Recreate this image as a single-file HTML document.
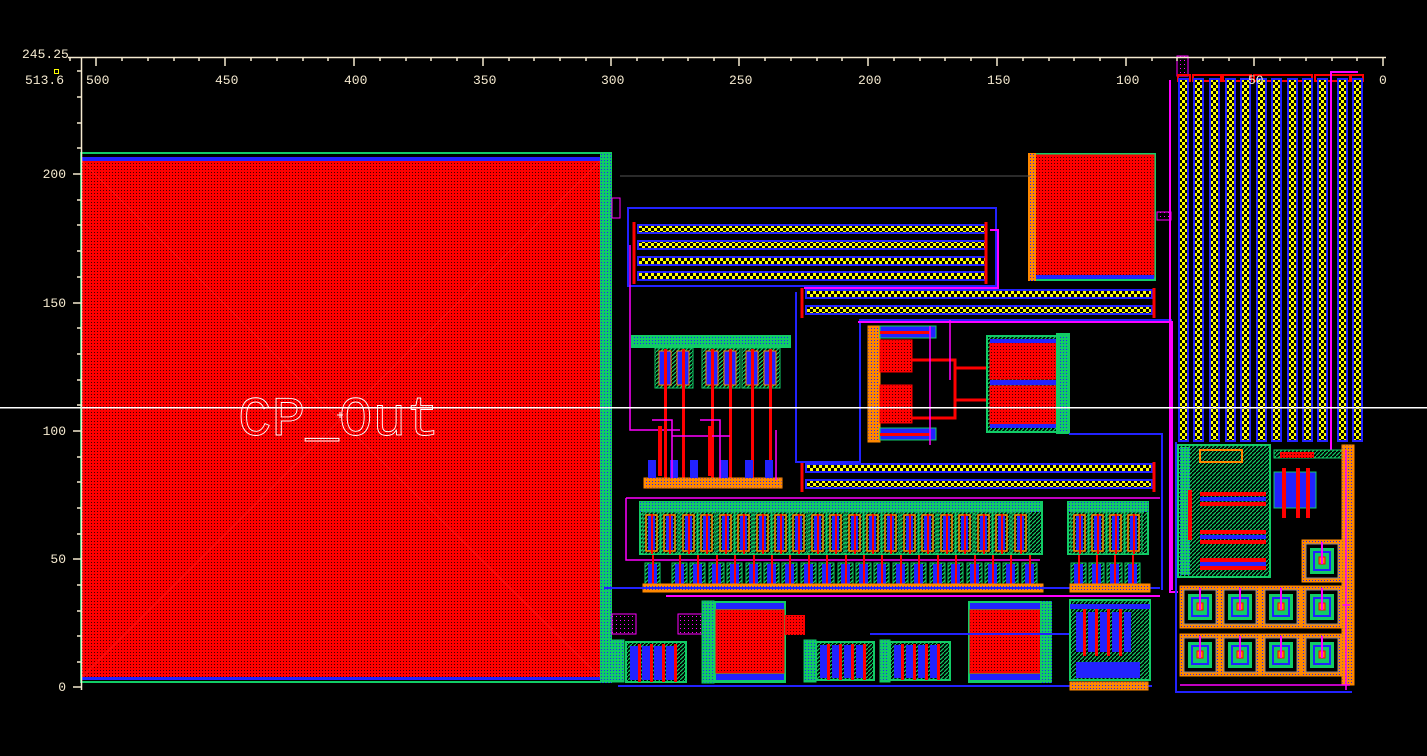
<!DOCTYPE html>
<html><head><meta charset="utf-8"><style>
html,body{margin:0;padding:0;background:#000;}
svg{display:block}
text{font-family:"Liberation Mono","DejaVu Sans Mono",monospace;}
</style></head><body>
<svg width="1427" height="756" viewBox="0 0 1427 756" xmlns="http://www.w3.org/2000/svg">
<defs>
<pattern id="pr" width="3" height="3" patternUnits="userSpaceOnUse"><rect width="3" height="3" fill="#f00"/><rect x="1" y="1" width="1" height="1" fill="#400"/></pattern>
<pattern id="py" width="6" height="6" patternUnits="userSpaceOnUse"><rect width="6" height="6" fill="#000"/><rect width="3" height="3" fill="#ff0"/><rect x="3" y="3" width="3" height="3" fill="#ff0"/></pattern>
<pattern id="pg" width="4" height="4" patternUnits="userSpaceOnUse"><rect width="4" height="4" fill="#000"/><path d="M0 4L4 0" stroke="#1c6" stroke-width="1.2"/></pattern>
<pattern id="po" width="3" height="3" patternUnits="userSpaceOnUse"><rect width="3" height="3" fill="#f80"/><rect x="1" y="1" width="1" height="1" fill="#2020ff"/></pattern>
<pattern id="pm" width="4" height="4" patternUnits="userSpaceOnUse"><rect width="4" height="4" fill="#000"/><rect width="1" height="1" fill="#f0f"/></pattern>
<pattern id="pgb" width="3" height="3" patternUnits="userSpaceOnUse"><rect width="3" height="3" fill="#1c6"/><rect x="1" y="1" width="1" height="1" fill="#22f"/></pattern>
<g id="fu">
 <rect x="0" y="0" width="17" height="42" fill="url(#pg)" stroke="#1c6"/>
 <rect x="3" y="3" width="11" height="36" fill="none" stroke="#f80" stroke-width="1.5"/>
 <rect x="5" y="4" width="7" height="34" fill="#22f"/>
 <rect x="8" y="2" width="2" height="40" fill="#f00"/>
</g>
<g id="fl">
 <rect x="0" y="0" width="15" height="22" fill="url(#pg)" stroke="#1c6"/>
 <rect x="3" y="1" width="9" height="21" fill="#22f"/>
 <rect x="7" y="-8" width="2" height="30" fill="#f00"/>
</g>
<g id="cell">
 <rect x="0" y="0" width="40" height="42" fill="url(#po)" stroke="#f80"/>
 <rect x="4" y="4" width="32" height="34" fill="#000" stroke="#889" />
 <rect x="8" y="8" width="24" height="26" fill="#1c6"/>
 <rect x="12" y="12" width="16" height="18" fill="none" stroke="#22f" stroke-width="2"/>
 <rect x="17" y="17" width="6" height="7" fill="#f80" stroke="#f00"/>
 <rect x="19" y="2" width="2" height="22" fill="#f0f"/>
</g>
<g id="ys"><rect x="0" y="0" width="9" height="362" fill="url(#py)" stroke="#22f" stroke-width="2"/></g>
</defs>

<rect x="80" y="152" width="532" height="531" fill="#1c6"/>
<rect x="82" y="154" width="528" height="527" fill="#000"/>
<rect x="82" y="157" width="518" height="4" fill="#22f"/>
<rect x="82" y="677" width="518" height="3" fill="#22f"/>
<rect x="82" y="161" width="518" height="516" fill="url(#pr)"/>
<path d="M82 161L340 420L82 677M600 161L340 420L600 677" fill="none" stroke="#f22" stroke-width="1" opacity="0.6"/>
<rect x="600" y="152" width="12" height="531" fill="url(#pgb)"/>
<rect x="612" y="198" width="8" height="20" fill="none" stroke="#f0f"/>

<rect x="1028" y="153" width="128" height="128" fill="#1c6"/>
<rect x="1030" y="155" width="124" height="122" fill="url(#pr)" stroke="#f00"/>
<rect x="1028" y="153" width="8" height="128" fill="url(#po)"/>
<rect x="1036" y="275" width="118" height="4" fill="#22f"/>
<rect x="1157" y="212" width="14" height="8" fill="url(#pm)" stroke="#f0f"/>

<rect x="628" y="208" width="368" height="78" fill="none" stroke="#22f" stroke-width="2"/>
<g fill="url(#py)" stroke="#22f" stroke-width="2">
<rect x="638" y="225" width="348" height="8"/><rect x="638" y="241" width="348" height="8"/>
<rect x="638" y="257" width="348" height="8"/><rect x="638" y="272" width="348" height="8"/>
<rect x="806" y="290" width="346" height="8"/><rect x="806" y="306" width="346" height="8"/>
<rect x="806" y="464" width="346" height="8"/><rect x="806" y="480" width="346" height="8"/>
</g>
<path d="M634 222V284M986 222V284M802 288V318M1154 288V318M802 462V492M1154 462V492" stroke="#f00" stroke-width="3"/>
<path d="M990 230H998V288H804" fill="none" stroke="#f0f" stroke-width="2"/>
<path d="M796 292V462H860V320H1172" fill="none" stroke="#22f" stroke-width="2"/>
<path d="M858 322H1172V590" fill="none" stroke="#f0f" stroke-width="2"/>
<path d="M630 245V430H680" fill="none" stroke="#f0f" stroke-width="1.5"/>

<rect x="632" y="336" width="158" height="11" fill="url(#pgb)" stroke="#1c6" stroke-width="2"/>
<g id="mg">
<rect x="655" y="348" width="38" height="40" fill="url(#pg)" stroke="#1c6"/>
<rect x="659" y="351" width="12" height="34" fill="#22f" stroke="#f80"/><rect x="677" y="351" width="12" height="34" fill="#22f" stroke="#f80"/>
<rect x="664" y="349" width="3" height="130" fill="#f00"/><rect x="682" y="349" width="3" height="130" fill="#f00"/>
</g>
<use href="#mg" x="47"/><use href="#mg" x="87"/>
<rect x="644" y="478" width="138" height="10" fill="url(#po)" stroke="#f80"/>
<g fill="#22f"><rect x="648" y="460" width="8" height="18"/><rect x="670" y="460" width="8" height="18"/><rect x="690" y="460" width="8" height="18"/><rect x="720" y="460" width="8" height="18"/><rect x="745" y="460" width="8" height="18"/><rect x="765" y="460" width="8" height="18"/></g>
<path d="M652 420H672V478M700 420H720V478M672 436H730M776 430V480" fill="none" stroke="#f0f" stroke-width="1.5"/>
<path d="M660 426V476M710 426V476" stroke="#f00" stroke-width="4"/>

<rect x="868" y="326" width="12" height="116" fill="url(#po)" stroke="#f80"/>
<rect x="880" y="326" width="56" height="12" fill="#22f" stroke="#1c6"/>
<rect x="880" y="340" width="32" height="32" fill="url(#pr)" stroke="#f00"/>
<rect x="880" y="385" width="32" height="38" fill="url(#pr)" stroke="#f00"/>
<rect x="880" y="428" width="56" height="12" fill="#22f" stroke="#1c6"/>
<rect x="880" y="331" width="50" height="3" fill="#f00"/><rect x="880" y="433" width="50" height="3" fill="#f00"/>
<path d="M912 360H955V418H912M955 368H990M955 400H990" fill="none" stroke="#f00" stroke-width="3"/>
<path d="M930 326V445M950 320V380" stroke="#f0f" stroke-width="1.5"/>
<rect x="987" y="336" width="80" height="96" fill="url(#pg)" stroke="#1c6" stroke-width="2"/>
<rect x="990" y="343" width="66" height="36" fill="url(#pr)" stroke="#f00"/>
<rect x="990" y="386" width="66" height="38" fill="url(#pr)" stroke="#f00"/>
<rect x="990" y="339" width="66" height="4" fill="#22f"/><rect x="990" y="380" width="66" height="5" fill="#22f"/><rect x="990" y="424" width="66" height="4" fill="#22f"/>
<rect x="1057" y="334" width="12" height="99" fill="url(#pgb)" stroke="#1c6" stroke-width="2"/>
<path d="M1069 434H1162V590" fill="none" stroke="#22f" stroke-width="2"/>
<path d="M620 176H1030" stroke="#555" stroke-width="1"/>

<rect x="640" y="502" width="402" height="52" fill="url(#pg)" stroke="#1c6" stroke-width="2"/>
<rect x="640" y="502" width="402" height="10" fill="url(#pgb)"/>
<g>
<use href="#fu" x="643" y="512"/><use href="#fu" x="661" y="512"/><use href="#fu" x="680" y="512"/><use href="#fu" x="698" y="512"/><use href="#fu" x="717" y="512"/><use href="#fu" x="735" y="512"/><use href="#fu" x="754" y="512"/><use href="#fu" x="772" y="512"/><use href="#fu" x="790" y="512"/><use href="#fu" x="809" y="512"/><use href="#fu" x="827" y="512"/><use href="#fu" x="846" y="512"/><use href="#fu" x="864" y="512"/><use href="#fu" x="882" y="512"/><use href="#fu" x="901" y="512"/><use href="#fu" x="919" y="512"/><use href="#fu" x="938" y="512"/><use href="#fu" x="956" y="512"/><use href="#fu" x="975" y="512"/><use href="#fu" x="993" y="512"/><use href="#fu" x="1012" y="512"/>
</g>
<path d="M626 498V560H1040M626 498H1160" fill="none" stroke="#f0f" stroke-width="1.5"/>
<g>
<use href="#fl" x="645" y="563"/><use href="#fl" x="672" y="563"/><use href="#fl" x="690" y="563"/><use href="#fl" x="709" y="563"/><use href="#fl" x="727" y="563"/><use href="#fl" x="746" y="563"/><use href="#fl" x="764" y="563"/><use href="#fl" x="782" y="563"/><use href="#fl" x="801" y="563"/><use href="#fl" x="819" y="563"/><use href="#fl" x="838" y="563"/><use href="#fl" x="856" y="563"/><use href="#fl" x="874" y="563"/><use href="#fl" x="893" y="563"/><use href="#fl" x="911" y="563"/><use href="#fl" x="930" y="563"/><use href="#fl" x="948" y="563"/><use href="#fl" x="967" y="563"/><use href="#fl" x="985" y="563"/><use href="#fl" x="1003" y="563"/><use href="#fl" x="1022" y="563"/>
</g>
<rect x="643" y="584" width="400" height="8" fill="url(#po)" stroke="#f80"/>
<path d="M666 596H1160" stroke="#f0f" stroke-width="2"/>
<path d="M604 588H1160" stroke="#22f" stroke-width="2"/>
<rect x="1068" y="502" width="80" height="52" fill="url(#pg)" stroke="#1c6" stroke-width="2"/>
<rect x="1068" y="502" width="80" height="10" fill="url(#pgb)"/>
<use href="#fu" x="1071" y="512"/><use href="#fu" x="1089" y="512"/><use href="#fu" x="1107" y="512"/><use href="#fu" x="1125" y="512"/>
<use href="#fl" x="1071" y="563"/><use href="#fl" x="1089" y="563"/><use href="#fl" x="1107" y="563"/><use href="#fl" x="1125" y="563"/>
<rect x="1070" y="584" width="80" height="8" fill="url(#po)" stroke="#f80"/>

<rect x="612" y="614" width="24" height="20" fill="url(#pm)" stroke="#f0f"/>
<rect x="612" y="640" width="12" height="42" fill="url(#pgb)" stroke="#1c6"/>
<rect x="626" y="642" width="60" height="40" fill="url(#pg)" stroke="#1c6" stroke-width="2"/>
<g fill="#22f"><rect x="630" y="646" width="8" height="34"/><rect x="642" y="646" width="8" height="34"/><rect x="654" y="646" width="8" height="34"/><rect x="666" y="646" width="8" height="34"/></g>
<g fill="#f00"><rect x="638" y="644" width="3" height="38"/><rect x="650" y="644" width="3" height="38"/><rect x="662" y="644" width="3" height="38"/><rect x="674" y="644" width="3" height="38"/></g>
<rect x="678" y="614" width="24" height="20" fill="url(#pm)" stroke="#f0f"/>
<rect x="702" y="601" width="12" height="82" fill="url(#pgb)" stroke="#1c6"/>
<rect x="714" y="601" width="72" height="82" fill="#1c6"/>
<rect x="716" y="603" width="68" height="6" fill="#22f"/><rect x="716" y="674" width="68" height="6" fill="#22f"/>
<rect x="716" y="610" width="68" height="63" fill="url(#pr)" stroke="#f00"/>
<rect x="785" y="615" width="20" height="20" fill="url(#pr)"/>
<rect x="804" y="640" width="12" height="42" fill="url(#pgb)" stroke="#1c6"/>
<rect x="816" y="642" width="58" height="38" fill="url(#pg)" stroke="#1c6" stroke-width="2"/>
<rect x="880" y="640" width="10" height="42" fill="url(#pgb)" stroke="#1c6"/>
<rect x="890" y="642" width="60" height="38" fill="url(#pg)" stroke="#1c6" stroke-width="2"/>
<g fill="#22f"><rect x="820" y="645" width="7" height="33"/><rect x="832" y="645" width="7" height="33"/><rect x="844" y="645" width="7" height="33"/><rect x="856" y="645" width="7" height="33"/><rect x="894" y="645" width="7" height="33"/><rect x="906" y="645" width="7" height="33"/><rect x="918" y="645" width="7" height="33"/><rect x="930" y="645" width="7" height="33"/></g>
<g fill="#f00"><rect x="827" y="644" width="3" height="36"/><rect x="839" y="644" width="3" height="36"/><rect x="851" y="644" width="3" height="36"/><rect x="863" y="644" width="3" height="36"/><rect x="901" y="644" width="3" height="36"/><rect x="913" y="644" width="3" height="36"/><rect x="925" y="644" width="3" height="36"/><rect x="937" y="644" width="3" height="36"/></g>
<rect x="968" y="601" width="82" height="82" fill="#1c6"/>
<rect x="970" y="603" width="70" height="6" fill="#22f"/><rect x="970" y="674" width="70" height="6" fill="#22f"/>
<rect x="970" y="610" width="70" height="63" fill="url(#pr)" stroke="#f00"/>
<rect x="1040" y="601" width="12" height="82" fill="url(#pgb)"/>
<path d="M618 686H1152M870 634H1070" fill="none" stroke="#22f" stroke-width="2"/>
<rect x="1070" y="600" width="80" height="80" fill="url(#pg)" stroke="#1c6" stroke-width="2"/>
<g fill="#22f"><rect x="1076" y="612" width="7" height="40"/><rect x="1088" y="612" width="7" height="40"/><rect x="1100" y="612" width="7" height="40"/><rect x="1112" y="612" width="7" height="40"/><rect x="1124" y="612" width="7" height="40"/></g>
<g fill="#f00"><rect x="1083" y="608" width="3" height="48"/><rect x="1095" y="608" width="3" height="48"/><rect x="1107" y="608" width="3" height="48"/><rect x="1119" y="608" width="3" height="48"/></g>
<rect x="1070" y="604" width="80" height="5" fill="#22f"/>
<rect x="1076" y="662" width="64" height="16" fill="#22f"/>
<rect x="1070" y="682" width="78" height="8" fill="url(#po)" stroke="#f80"/>

<path d="M1170 80V592H1178" fill="none" stroke="#f0f" stroke-width="2"/>
<rect x="1177" y="56" width="11" height="20" fill="url(#pm)" stroke="#f0f"/>
<g fill="none" stroke="#f00" stroke-width="2">
<rect x="1178" y="75" width="12" height="6"/><rect x="1193" y="75" width="28" height="6"/><rect x="1223" y="75" width="28" height="6"/><rect x="1254" y="75" width="58" height="6"/><rect x="1315" y="75" width="35" height="6"/><rect x="1351" y="75" width="12" height="6"/>
</g>
<use href="#ys" x="1179" y="79"/><use href="#ys" x="1194" y="79"/><use href="#ys" x="1210" y="79"/><use href="#ys" x="1226" y="79"/><use href="#ys" x="1241" y="79"/><use href="#ys" x="1257" y="79"/><use href="#ys" x="1272" y="79"/><use href="#ys" x="1288" y="79"/><use href="#ys" x="1303" y="79"/><use href="#ys" x="1318" y="79"/><use href="#ys" x="1338" y="79"/><use href="#ys" x="1353" y="79"/>
<path d="M1331 80V72H1358M1331 72V450" fill="none" stroke="#f0f" stroke-width="2"/>

<rect x="1178" y="445" width="92" height="132" fill="url(#pg)" stroke="#1c6" stroke-width="2"/>
<rect x="1180" y="447" width="10" height="128" fill="url(#pgb)"/>
<rect x="1200" y="450" width="42" height="12" fill="none" stroke="#f80" stroke-width="2"/>
<g fill="#f00"><rect x="1200" y="492" width="66" height="4"/><rect x="1200" y="502" width="66" height="4"/><rect x="1200" y="530" width="66" height="4"/><rect x="1200" y="540" width="66" height="4"/><rect x="1200" y="558" width="66" height="4"/><rect x="1200" y="566" width="66" height="4"/></g>
<g fill="#22f"><rect x="1200" y="497" width="66" height="4"/><rect x="1200" y="535" width="66" height="4"/><rect x="1200" y="562" width="66" height="4"/></g>
<path d="M1190 490V540" stroke="#f00" stroke-width="4"/>
<rect x="1274" y="450" width="70" height="8" fill="url(#pg)" stroke="#1c6"/>
<rect x="1280" y="452" width="34" height="6" fill="url(#pr)"/>
<rect x="1274" y="472" width="42" height="36" fill="#22f" stroke="#1c6"/>
<g fill="#f00"><rect x="1282" y="468" width="4" height="50"/><rect x="1296" y="468" width="4" height="50"/><rect x="1306" y="468" width="4" height="50"/></g>
<rect x="1342" y="445" width="12" height="240" fill="url(#po)" stroke="#f80"/>
<path d="M1346 450V690M1180 605H1350M1180 685H1350" fill="none" stroke="#f0f" stroke-width="1.5"/>
<use href="#cell" x="1302" y="540"/>
<use href="#cell" x="1180" y="586"/><use href="#cell" x="1220" y="586"/><use href="#cell" x="1261" y="586"/><use href="#cell" x="1302" y="586"/>
<use href="#cell" x="1180" y="634"/><use href="#cell" x="1220" y="634"/><use href="#cell" x="1261" y="634"/><use href="#cell" x="1302" y="634"/>
<path d="M1176 442V692H1352" fill="none" stroke="#22f" stroke-width="2"/>

<rect x="0" y="407" width="1427" height="1.5" fill="#fff"/>
<text x="238" y="435" font-size="56" fill="none" stroke="#fff" stroke-width="0.9">CP_Out</text>
<path d="M337 415h6M340 412v6" stroke="#fff"/>

<g stroke="#f5ead0" stroke-width="1.5" fill="none">
<path d="M68 57.5H1386M81.5 57V690"/>
<path d="M96 57v9M225 57v9M354 57v9M483 57v9M611 57v9M739 57v9M868 57v9M997 57v9M1126 57v9M1254 57v9M1383 57v9"/>
<path d="M122 57v4M148 57v4M174 57v4M199 57v4M251 57v4M277 57v4M303 57v4M328 57v4M380 57v4M406 57v4M431 57v4M457 57v4M509 57v4M534 57v4M560 57v4M586 57v4M637 57v4M663 57v4M688 57v4M714 57v4M765 57v4M791 57v4M817 57v4M842 57v4M894 57v4M920 57v4M945 57v4M971 57v4M1023 57v4M1049 57v4M1074 57v4M1100 57v4M1152 57v4M1177 57v4M1203 57v4M1229 57v4M1280 57v4M1306 57v4M1332 57v4M1357 57v4M70 57v4"/>
<path d="M81 174h-8M81 303h-8M81 431h-8M81 559h-8M81 687h-8"/>
<path d="M81 71h-4M81 97h-4M81 123h-4M81 148h-4M81 200h-4M81 225h-4M81 251h-4M81 277h-4M81 328h-4M81 354h-4M81 380h-4M81 405h-4M81 457h-4M81 482h-4M81 508h-4M81 534h-4M81 585h-4M81 611h-4M81 636h-4M81 662h-4"/>
</g>
<rect x="54.5" y="69.5" width="4" height="4" fill="none" stroke="#ff0"/>
<g fill="#f5ead0" font-size="13">
<text x="22" y="58">245.25</text>
<text x="25" y="84">513.6</text>
<text x="86" y="84">500</text><text x="215" y="84">450</text><text x="344" y="84">400</text><text x="473" y="84">350</text><text x="601" y="84">300</text><text x="729" y="84">250</text><text x="858" y="84">200</text><text x="987" y="84">150</text><text x="1116" y="84">100</text><text x="1248" y="84">50</text><text x="1379" y="84">0</text>
<text x="66" y="178" text-anchor="end">200</text><text x="66" y="307" text-anchor="end">150</text><text x="66" y="435" text-anchor="end">100</text><text x="66" y="563" text-anchor="end">50</text><text x="66" y="691" text-anchor="end">0</text>
</g>
</svg>
</body></html>
